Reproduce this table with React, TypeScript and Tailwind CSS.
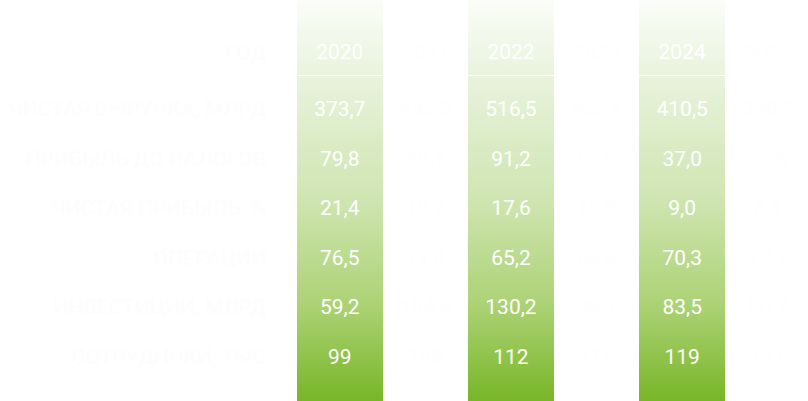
const years = ['2020', '2021', '2022', '2023', '2024', '2025'];

const labels = [
  'ЧИСТАЯ ВЫРУЧКА, МЛРД',
  'ПРИБЫЛЬ ДО НАЛОГОВ',
  'ЧИСТАЯ ПРИБЫЛЬ, %',
  'ОПЕРАЦИИ',
  'ИНВЕСТИЦИИ, МЛРД',
  'СОТРУДНИКИ, ТЫС',
];

const values: string[][] = [
  ['373,7', '79,8', '21,4', '76,5', '59,2', '99'],
  ['445,3', '88,1', '19,7', '71,0', '104,6', '108'],
  ['516,5', '91,2', '17,6', '65,2', '130,2', '112'],
  ['462,4', '52,9', '12,8', '68,4', '96,1', '116'],
  ['410,5', '37,0', '9,0', '70,3', '83,5', '119'],
  ['398,2', '35,6', '8,4', '72,1', '80,7', '121'],
];

function Column({ year, rows, green }: { year: string; rows: string[]; green: boolean }) {
  return (
    <div
      className={
        green
          ? 'flex flex-col bg-[linear-gradient(to_bottom,#fbfdf8_0%,#e9f3dd_19%,#cfe5b1_50%,#acd275_76%,#78b628_100%)] text-white'
          : 'flex flex-col text-[#fefefe]'
      }
    >
      <div className={green ? 'h-[76px] flex items-end justify-center pb-[7px] border-b border-white' : 'h-[76px] flex items-end justify-center pb-[7px]'}>
        {year}
      </div>
      <div className="pt-[9px]">
        {rows.map((v, i) => (
          <div key={i} className="h-[49.6px] flex items-center justify-center">
            {v}
          </div>
        ))}
      </div>
    </div>
  );
}

export default function App() {
  return (
    <div className="h-[401px] w-[808px] overflow-hidden bg-white font-['Roboto',sans-serif] text-[21px]">
      <div className="grid grid-cols-[297px_repeat(6,85.6px)] h-full">
        <div className="flex flex-col text-[#fdfdfd] font-medium uppercase text-right pr-[31px]">
          <div className="h-[76px] flex items-end justify-end pb-[7px]">Год</div>
          <div className="pt-[9px]">
            {labels.map((l) => (
              <div key={l} className="h-[49.6px] flex items-center justify-end whitespace-nowrap">
                {l}
              </div>
            ))}
          </div>
        </div>
        {years.map((y, i) => (
          <Column key={y} year={y} rows={values[i]} green={i % 2 === 0} />
        ))}
      </div>
    </div>
  );
}
